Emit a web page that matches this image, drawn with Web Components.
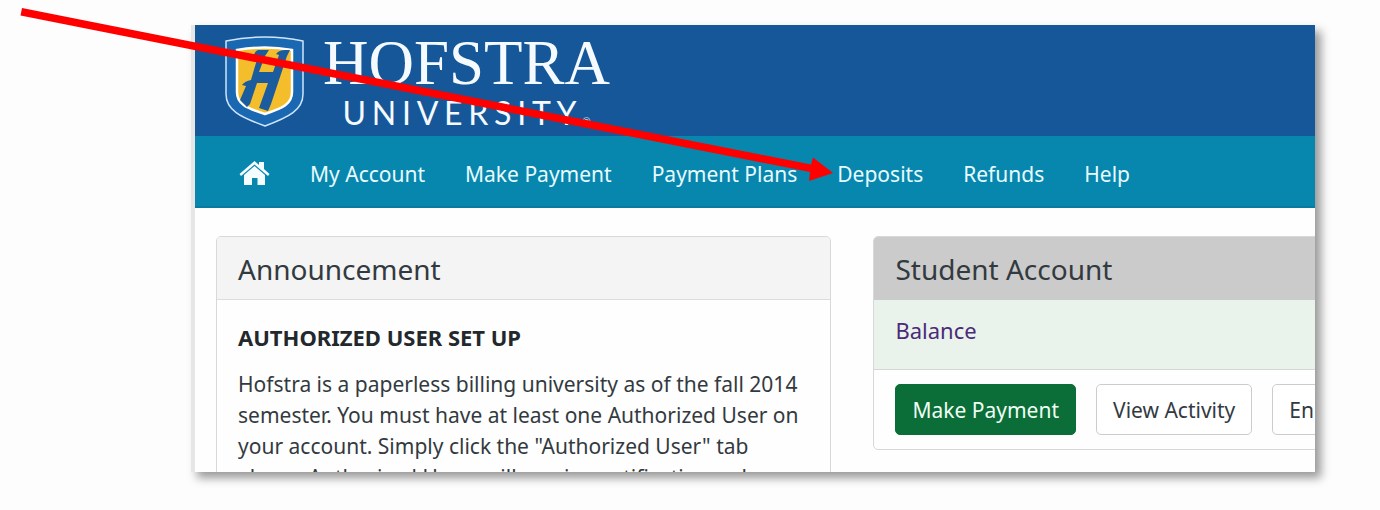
<!DOCTYPE html>
<html lang="en">
<head>
<meta charset="utf-8">
<title>Hofstra University - Student Account</title>
<style>
   body {
      margin: 0;
      background-color: #fdfdfd;
      color: #333a3f;
      font-family: "Noto Sans", "Open Sans", sans-serif;
      font-size: 21px;
      line-height: 32px;
   }
</style>
</head>
<body>
<ui-stage>
   <ui-callout slot="callout"></ui-callout>
   <ui-masthead></ui-masthead>
   <ui-navbar>
      <ui-navitem href="#home"><ui-homeicon></ui-homeicon></ui-navitem>
      <ui-navitem href="#account">My Account</ui-navitem>
      <ui-navitem href="#payment">Make Payment</ui-navitem>
      <ui-navitem href="#plans">Payment Plans</ui-navitem>
      <ui-navitem href="#deposits">Deposits</ui-navitem>
      <ui-navitem href="#refunds">Refunds</ui-navitem>
      <ui-navitem href="#help">Help</ui-navitem>
   </ui-navbar>
   <ui-columns>
      <ui-card>
         <span slot="title">Announcement</span>
         <ui-announcement>
            <span slot="heading">AUTHORIZED USER SET UP</span>
            Hofstra is a paperless billing university as of the fall 2014<br>
            semester. You must have at least one Authorized User on<br>
            your account. Simply click the "Authorized User" tab<br>
            above. Authorized Users will receive notifications when
         </ui-announcement>
      </ui-card>
      <ui-card tone="dark">
         <span slot="title">Student Account</span>
         <ui-balance>Balance</ui-balance>
         <ui-actions>
            <ui-button kind="primary">Make Payment</ui-button>
            <ui-button>View Activity</ui-button>
            <ui-button>Enroll</ui-button>
         </ui-actions>
      </ui-card>
   </ui-columns>
</ui-stage>

<script>
function define(name, html, setup) {
   const template = document.createElement('template');
   template.innerHTML = html;

   window.customElements.define(name, class extends HTMLElement {
      constructor() {
         super();
         this.attachShadow({mode: 'open'});
         this.shadowRoot.append(template.content.cloneNode(true));
      }

      connectedCallback() {
         if (setup) setup(this);
      }
   });
}

define('ui-stage', `
   <style>
      :host {
         display: flex;
         box-sizing: border-box;
         height: 100vh;
         padding: 25px 65px 38px 191px;
         overflow: hidden;
      }
      main {
         flex: 1;
         min-width: 0;
         overflow: hidden;
         background-color: #fefefe;
         border-left: 4px solid #e6e6e6;
         box-shadow: 6px 6px 9px #999999;
      }
   </style>
   <main><slot></slot></main>
   <slot name="callout"></slot>`);

// red arrow that points at the Deposits item
define('ui-callout', `
   <style>
      :host {
         position: absolute;
         top: 0;
         left: 0;
         pointer-events: none;
      }
      svg { display: block; }
   </style>
   <svg width="840" height="190" viewBox="0 0 840 190" fill="#ff0000" aria-hidden="true">
      <path d="M22 8 L811 164.500 L813 157.500 L833 173 L809 181 L810 172 L20.500 15.500 Z"/>
   </svg>`);

define('ui-masthead', `
   <style>
      :host {
         display: flex;
         gap: 18px;
         box-sizing: border-box;
         height: 111px;
         padding: 11px 30px 0;
         background-color: #155798;
         color: #f4faff;
      }
      svg { flex: none; }
      .wordmark {
         display: flex;
         flex-direction: column;
         align-items: center;
         white-space: nowrap;
      }
      .name {
         font: 63px/54px "Liberation Serif", serif;
      }
      .kind {
         font: 400 32px/46px Lato, sans-serif;
         letter-spacing: 0.18em;
      }
      sup {
         font-size: 10px;
         line-height: 0;
         letter-spacing: 0;
         vertical-align: baseline;
      }
   </style>
   <svg width="80" height="92" viewBox="0 0 80 92" aria-hidden="true">
      <path d="M1 5 Q40 -3 78 5 V58 C78 74 64 81 40 90 C15 81 1 74 1 58 Z" fill="#1a68b2" stroke="#cfe5fa" stroke-width="1.500"/>
      <path d="M12 14 Q40 9 67 14 V56 C67 68 58 72 40 78 C21 72 12 68 12 56 Z" fill="#f3bd2c" stroke="#ffffff" stroke-width="2.500"/>
      <path d="M33 14 H44 L40 20 L34 36 H48 L54 19 L51 18 Q54 14 60 14 H65 L62 20 L46 68 L43 75 L34 72 L43 47 H32 L25 68 L22 71 L15 64 L21 50 L17 49 Q20 45 26 44 L33 20 L29 19 Q30 15 33 14 Z" fill="#1a5c9e"/>
   </svg>
   <div class="wordmark">
      <div class="name">HOFSTRA</div>
      <div class="kind">UNIVERSITY<sup>®</sup></div>
   </div>`);

define('ui-navbar', `
   <style>
      :host { display: block; }
      nav {
         display: flex;
         align-items: center;
         gap: 40px;
         box-sizing: border-box;
         height: 72px;
         padding: 6px 44px 0;
         background-color: #0787ae;
         border-bottom: 2px solid #087b9e;
         color: #e9fbff;
      }
   </style>
   <nav><slot></slot></nav>`);

define('ui-navitem', `
   <style>
      :host { display: block; }
      a {
         display: block;
         color: inherit;
         text-decoration: none;
         white-space: nowrap;
      }
   </style>
   <a><slot></slot></a>`,
   (item) => item.shadowRoot.querySelector('a').href = item.getAttribute('href'));

define('ui-homeicon', `
   <style>
      :host { display: block; }
      svg { display: block; }
   </style>
   <svg width="31" height="26" viewBox="0 0 31 26" fill="#f4fdff" role="img" aria-label="Home">
      <path d="M15.500 0 L20 4 V1 H25 V8 L30.500 13 L29 15 L15.500 3.500 L2 15 L0.500 13 Z"/>
      <path d="M15.500 5 L26 14 V24 H18.500 V17 H13 V24 H5 V14 Z"/>
   </svg>`);

define('ui-columns', `
   <style>
      :host {
         display: grid;
         grid-template-columns: 56% 56%;
         align-items: start;
         gap: 42px;
         padding: 28px 0 28px 21px;
      }
   </style>
   <slot></slot>`);

define('ui-card', `
   <style>
      :host {
         display: block;
         border: 1px solid #d8d8d8;
         border-radius: 5px;
         overflow: hidden;
      }
      h2 {
         margin: 0;
         padding: 16px 21px 14px;
         background-color: #f4f4f4;
         border-bottom: 1px solid #dcdcdc;
         font-size: 28px;
         font-weight: 400;
         line-height: 32px;
      }
      :host([tone="dark"]) h2 {
         background-color: #cbcbcb;
         border-color: #cbcbcb;
      }
   </style>
   <h2><slot name="title"></slot></h2>
   <slot></slot>`);

define('ui-announcement', `
   <style>
      :host {
         display: block;
         padding: 21px;
      }
      h3, p {
         margin: 0 0 16px;
         white-space: nowrap;
      }
      h3 {
         color: #23282c;
         font-size: 22px;
      }
      p { line-height: 31px; }
   </style>
   <h3><slot name="heading"></slot></h3>
   <p><slot></slot></p>`);

define('ui-balance', `
   <style>
      :host {
         display: block;
         padding: 14px 21px 23px;
         background-color: #e9f3eb;
         border-bottom: 1px solid #d4d8d5;
         font-size: 22px;
      }
      a {
         color: #4b2a79;
         text-decoration: none;
      }
   </style>
   <a href="#balance"><slot></slot></a>`);

define('ui-actions', `
   <style>
      :host {
         display: flex;
         gap: 20px;
         padding: 14px 21px;
      }
   </style>
   <slot></slot>`);

define('ui-button', `
   <style>
      :host {
         display: block;
         flex: none;
      }
      button {
         display: block;
         padding: 9px 16px 8px;
         background-color: #ffffff;
         border: 1px solid #cccccc;
         border-radius: 5px;
         color: inherit;
         font: inherit;
         white-space: nowrap;
      }
      :host([kind="primary"]) button {
         background-color: #0b6d38;
         border-color: #0b6d38;
         color: #effff4;
      }
   </style>
   <button type="button"><slot></slot></button>`);
</script>
</body>
</html>
